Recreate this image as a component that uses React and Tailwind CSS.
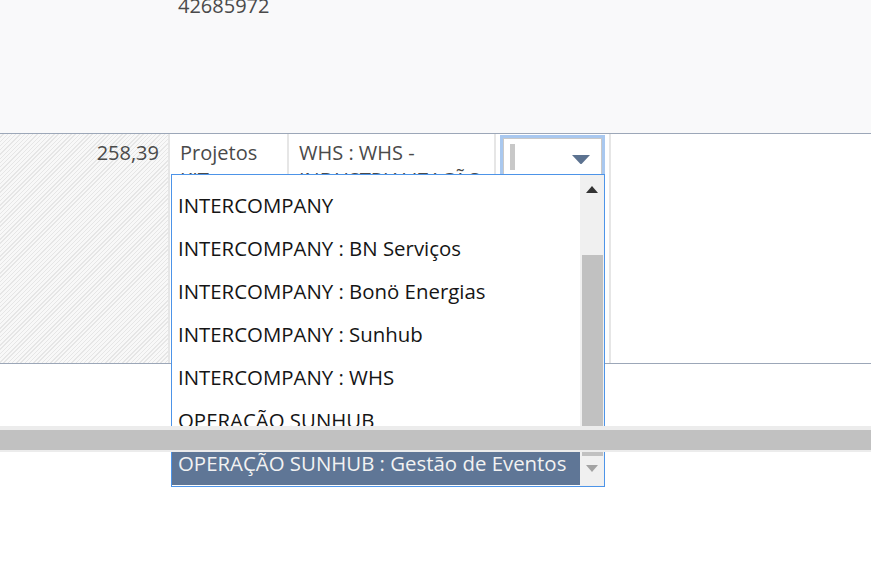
import React from "react";

const items = [
  "INTERCOMPANY",
  "INTERCOMPANY : BN Serviços",
  "INTERCOMPANY : Bonö Energias",
  "INTERCOMPANY : Sunhub",
  "INTERCOMPANY : WHS",
  "OPERACÃO SUNHUB",
];

export default function App() {
  return (
    <div className="relative w-[871px] h-[575px] overflow-hidden bg-white font-['Open_Sans',sans-serif] text-[20px] leading-[27px]">
      {/* previous row */}
      <div className="h-[133px] bg-[#f9f9fa] overflow-hidden">
        <div className="pl-[178px] mt-[-8px] text-[#4a4a4a]">42685972</div>
      </div>

      {/* current row */}
      <div className="flex h-[231px] border-t border-b border-[#9ca7b8] text-[#4a4a4a]">
        <div className="w-[170px] border-r-2 border-[#e6e6e6] bg-[#f5f5f5] bg-[repeating-linear-gradient(135deg,#f8f8f8_0px,#f8f8f8_2px,#e6e6e6_2px,#e6e6e6_3px)] text-right pr-[9px] pt-[5px]">
          258,39
        </div>
        <div className="w-[119px] border-r-2 border-[#e6e6e6] pl-[10px] pt-[5px] overflow-hidden">
          Projetos
          <br />
          KIT
        </div>
        <div className="w-[207px] border-r-2 border-[#e6e6e6] pl-[10px] pt-[5px] overflow-hidden whitespace-nowrap">
          WHS : WHS -
          <br />
          INDUSTRIALIZAÇÃO
        </div>
        <div className="w-[115px] border-r-2 border-[#e6e6e6] pl-[4px] pt-[1px]">
          <div className="w-[105px] h-[44px] border-[3px] border-[#a9c8ef] bg-white">
            <div className="h-full border border-[#c9c9c9] flex items-start pt-[5px] pl-[6px] pr-[10px] justify-between">
              <div className="w-[5px] h-[26px] bg-[#c8c8c8]" />
              <svg width="20" height="11" viewBox="0 0 20 11" className="mt-[10px]">
                <path d="M1 1 L19 1 L11 9.5 Q10 10.5 9 9.5 Z" fill="#5c7290" />
              </svg>
            </div>
          </div>
        </div>
        <div className="flex-1" />
      </div>

      {/* dropdown list */}
      <div className="absolute left-[171px] top-[174px] w-[434px] h-[313px] border border-[#4d94e8] bg-white flex text-[20.4px]">
        <div className="flex-1 pt-[9px] text-[#151515]">
          {items.map((t) => (
            <div key={t} className="h-[43px] flex items-center pl-[6px] whitespace-nowrap">
              {t}
            </div>
          ))}
          <div className="h-[43px] flex items-center pl-[6px] whitespace-nowrap bg-[#5f7696] text-[#f2f2f2]">
            OPERAÇÃO SUNHUB : Gestão de Eventos
          </div>
        </div>
        <div className="w-[24px] bg-[#f0f0f0] flex flex-col items-center">
          <div className="h-[80px] w-full flex justify-center pt-[11px]">
            <svg width="12" height="7" viewBox="0 0 12 7">
              <path d="M6 0 L12 7 L0 7 Z" fill="#333" />
            </svg>
          </div>
          <div className="w-[21px] h-[201px] bg-[#c1c1c1]" />
          <div className="flex-1 flex justify-center items-center pb-[6px]">
            <svg width="12" height="7" viewBox="0 0 12 7">
              <path d="M0 0 L12 0 L6 7 Z" fill="#a3a3a3" />
            </svg>
          </div>
        </div>
      </div>

      {/* sticky horizontal scrollbar */}
      <div className="absolute left-0 top-[426px] w-full h-[26px] bg-[#ececec] pt-[4px]">
        <div className="h-[20px] bg-[#c1c1c1]" />
      </div>
    </div>
  );
}
